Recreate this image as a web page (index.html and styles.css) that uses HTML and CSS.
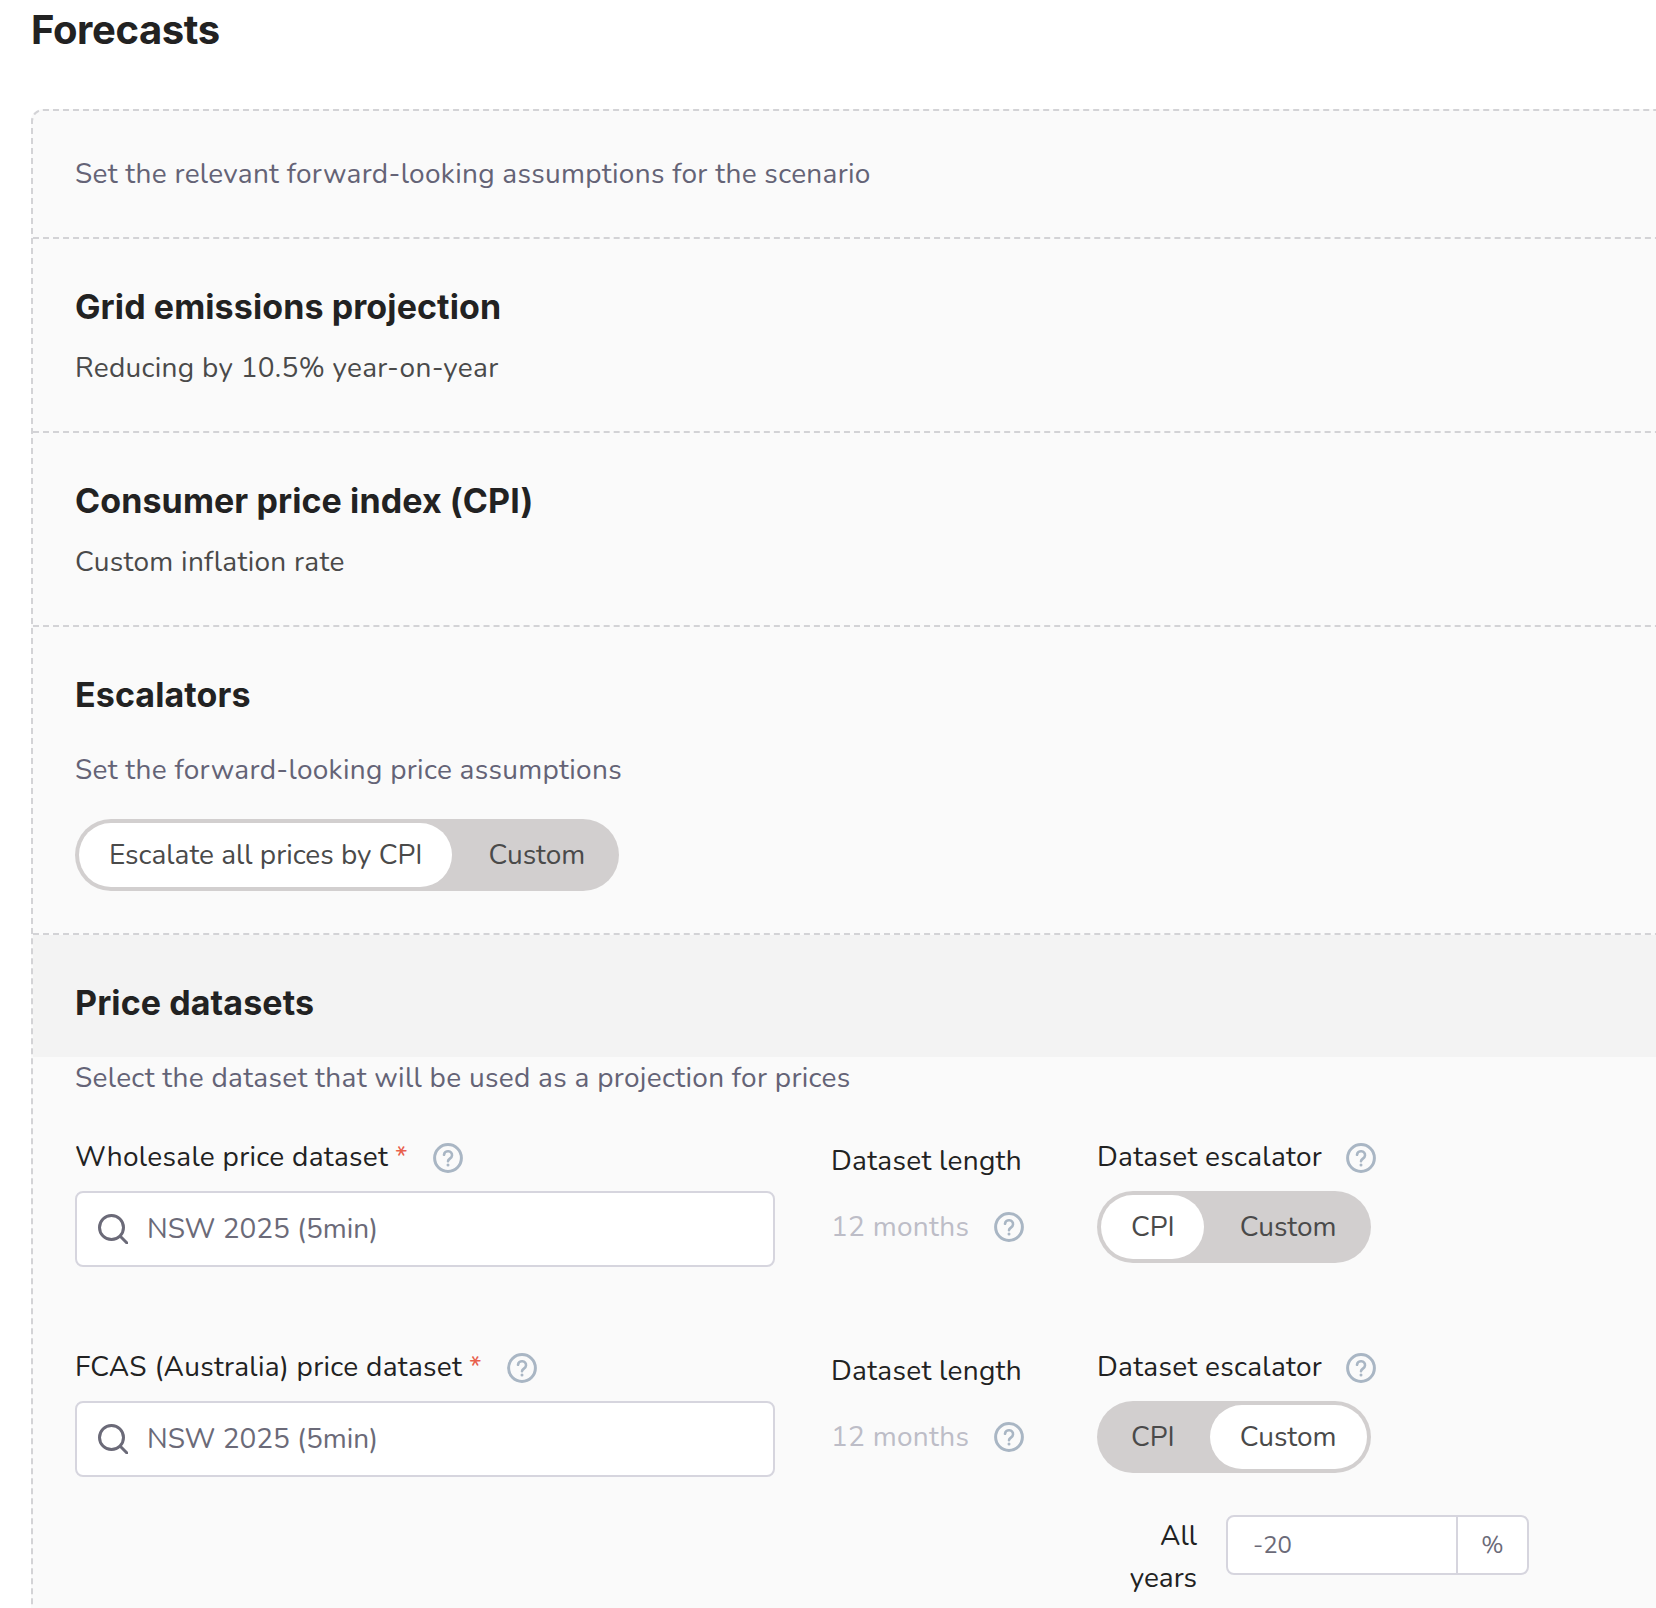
FILE: index.html
```html
<!DOCTYPE html>
<html lang="en">
<head>
<meta charset="utf-8">
<title>Forecasts</title>
<link rel="stylesheet" href="styles.css">
</head>
<body>
<svg class="defs" width="0" height="0" aria-hidden="true">
  <symbol id="help" viewBox="0 0 30 30">
    <circle cx="15" cy="15" r="13.4" fill="none" stroke="currentColor" stroke-width="3"/>
    <path d="M11 11.8a4 4 0 0 1 8 .8c0 2.8-4 3.2-4 5.6" fill="none" stroke="currentColor" stroke-width="2.6" stroke-linecap="round"/>
    <circle cx="15" cy="22" r="1.5" fill="currentColor"/>
  </symbol>
  <symbol id="search" viewBox="0 0 30 30">
    <circle cx="13.5" cy="13.5" r="12" fill="none" stroke="currentColor" stroke-width="3"/>
    <path d="M22.5 22.5 29 29" fill="none" stroke="currentColor" stroke-width="3" stroke-linecap="round"/>
  </symbol>
</svg>
<h1 class="page-title">Forecasts</h1>
<main class="card">
  <section class="section">
    <p class="muted spaced">Set the relevant forward-looking assumptions for the scenario</p>
  </section>
  <section class="section">
    <h2 class="heading">Grid emissions projection</h2>
    <p class="summary spaced">Reducing by 10.5% year-on-year</p>
  </section>
  <section class="section">
    <h2 class="heading">Consumer price index (CPI)</h2>
    <p class="summary spaced">Custom inflation rate</p>
  </section>
  <section class="section">
    <h2 class="heading">Escalators</h2>
    <p class="muted spaced desc">Set the forward-looking price assumptions</p>
    <div class="toggle">
      <span class="seg seg-active">Escalate all prices by CPI</span>
      <span class="seg">Custom</span>
    </div>
  </section>
  <div class="band">
    <h2 class="heading">Price datasets</h2>
  </div>
  <section class="datasets">
    <p class="muted spaced">Select the dataset that will be used as a projection for prices</p>

    <div class="dataset-row">
      <div class="col-select">
        <div class="label-row">
          <label class="label spaced">Wholesale price dataset</label><span class="req">*</span>
          <svg class="help help-label"><use href="#help"/></svg>
        </div>
        <div class="search-box">
          <svg class="search-icon"><use href="#search"/></svg>
          <span class="search-value">NSW 2025 (5min)</span>
        </div>
      </div>
      <div class="col-length">
        <div class="label spaced length-label">Dataset length</div>
        <div class="length-value spaced"><span>12 months</span><svg class="help"><use href="#help"/></svg></div>
      </div>
      <div class="col-esc">
        <div class="label-row">
          <span class="label spaced">Dataset escalator</span>
          <svg class="help help-esc"><use href="#help"/></svg>
        </div>
        <div class="toggle">
          <span class="seg seg-active seg-cpi">CPI</span>
          <span class="seg">Custom</span>
        </div>
      </div>
    </div>

    <div class="dataset-row">
      <div class="col-select">
        <div class="label-row">
          <label class="label spaced">FCAS (Australia) price dataset</label><span class="req">*</span>
          <svg class="help help-label"><use href="#help"/></svg>
        </div>
        <div class="search-box">
          <svg class="search-icon"><use href="#search"/></svg>
          <span class="search-value">NSW 2025 (5min)</span>
        </div>
      </div>
      <div class="col-length">
        <div class="label spaced length-label">Dataset length</div>
        <div class="length-value spaced"><span>12 months</span><svg class="help"><use href="#help"/></svg></div>
      </div>
      <div class="col-esc">
        <div class="label-row">
          <span class="label spaced">Dataset escalator</span>
          <svg class="help help-esc"><use href="#help"/></svg>
        </div>
        <div class="toggle">
          <span class="seg seg-cpi">CPI</span>
          <span class="seg seg-active">Custom</span>
        </div>
        <div class="custom-row">
          <span class="all-years">All years</span>
          <div class="percent-box">
            <span class="percent-value">-20</span>
            <span class="percent-unit">%</span>
          </div>
        </div>
      </div>
    </div>
  </section>
</main>
</body>
</html>
```
FILE: styles.css
```css
* { box-sizing: border-box; }
html, body { margin: 0; height: 1608px; overflow: hidden; background: #fff; }
body {
  width: 1656px;
  font-family: "Nunito", "Lato", "Noto Sans", sans-serif;
  font-size: 28px;
  line-height: 42px;
  color: #222;
}
.defs { position: absolute; }
p, h1, h2 { margin: 0; }
.spaced { letter-spacing: 0.3px; }
.page-title {
  margin: 0 0 0 31px;
  height: 109px;
  font-family: "Inter", sans-serif;
  font-size: 40px;
  line-height: 60px;
  font-weight: 700;
  letter-spacing: -0.4px;
  color: #222;
}
.card {
  width: 1700px;
  margin-left: 31px;
  background: #fafafa;
  border: 2px dashed #d3d3d6;
  border-right: 0;
  border-top-left-radius: 12px;
}
.section {
  padding: 43px 42px 42px;
  border-bottom: 2px dashed #d3d3d6;
}
.section:first-child { padding: 42px; }
.heading {
  font-family: "Inter", sans-serif;
  font-size: 34px;
  line-height: 50px;
  font-weight: 700;
  letter-spacing: 0.1px;
  color: #222;
}
.muted { color: #646376; }
.summary { margin-top: 15px; color: #4a4a4a; }
.desc { margin: 29px 0 28px; }
.toggle {
  display: inline-flex;
  gap: 6px;
  height: 72px;
  padding: 4px;
  border-radius: 36px;
  background: #d2cfcf;
  color: #4a4a4a;
}
.seg {
  display: flex;
  align-items: center;
  height: 64px;
  padding: 0 30px;
  border-radius: 32px;
}
.seg-cpi { padding-right: 29px; }
.seg-active { background: #fff; }
.band {
  padding: 43px 42px 29px;
  background: #f3f3f3;
}
.datasets { padding: 0 42px 80px; }
.dataset-row { display: flex; margin-top: 37px; margin-bottom: 79px; }
.col-select { width: 700px; margin-right: 56px; flex: none; }
.label-row { display: flex; align-items: center; height: 42px; margin-bottom: 13px; }
.label { color: #222; }
.req { color: #e8604c; margin-left: 7px; align-self: flex-start; }
.help { width: 30px; height: 30px; color: #a9b6c4; flex: none; }
.help-label { margin: 2px 0 0 25px; }
.help-esc { margin: 2px 0 0 24px; }
.search-box {
  display: flex;
  align-items: center;
  height: 76px;
  padding: 0 21px;
  gap: 19px;
  background: #fff;
  border: 2px solid #d6d5de;
  border-radius: 8px;
}
.search-icon { width: 30px; height: 30px; color: #6b6a78; flex: none; }
.search-value { color: #6b6a78; }
.col-length { width: 266px; flex: none; }
.length-label { margin-top: 4px; }
.length-value {
  display: flex;
  align-items: center;
  gap: 25px;
  margin-top: 24px;
  color: #bdbdc7;
}
.col-esc { flex: none; }
.custom-row { display: flex; margin-top: 42px; }
.all-years { width: 100px; text-align: right; color: #222; }
.percent-box {
  display: flex;
  width: 303px;
  height: 60px;
  margin-left: 29px;
  background: #fff;
  border: 2px solid #d6d5de;
  border-radius: 8px;
  font-size: 24px;
  color: #6b6a78;
}
.percent-value { flex: 1; display: flex; align-items: center; padding-left: 25px; border-right: 2px solid #d6d5de; }
.percent-unit { width: 69px; display: flex; align-items: center; justify-content: center; }
```
